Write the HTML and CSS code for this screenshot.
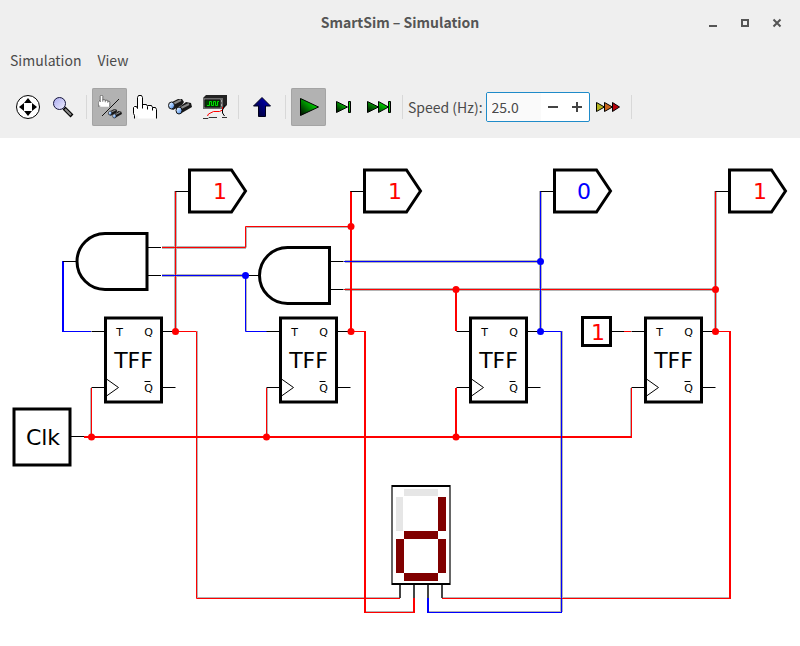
FILE: index.html
```html
<!DOCTYPE html>
<html lang="en">
<head>
<meta charset="utf-8">
<title>SmartSim – Simulation</title>
<link rel="stylesheet" href="styles.css">
</head>
<body>
<header class="titlebar">
  <h1 class="title">SmartSim – Simulation</h1>
  <div class="window-buttons">
    <button class="window-button" aria-label="Minimize"><svg width="10" height="10" shape-rendering="crispEdges"><path d="M1 7h8v2H1z" fill="#555"/></svg></button>
    <button class="window-button" aria-label="Maximize"><svg width="10" height="10" shape-rendering="crispEdges"><path d="M2 2h6v6H2z" fill="none" stroke="#555" stroke-width="2"/></svg></button>
    <button class="window-button" aria-label="Close"><svg width="10" height="10"><path d="M1.500 1.500l7 7M8.500 1.500l-7 7" stroke="#555" stroke-width="2"/></svg></button>
  </div>
</header>
<nav class="menubar">
  <button class="menu">Simulation</button>
  <button class="menu">View</button>
</nav>
<div class="toolbar">
  <button class="tool" aria-label="Scroll">
    <svg width="24" height="24" viewBox="0 0 24 24"><circle cx="12" cy="12" r="11.500" fill="#fff" stroke="#000"/><path d="M12 3l4 5H8zM12 21l4-5H8zM3 12l5-4v8zM21 12l-5-4v8z"/></svg>
  </button>
  <button class="tool" aria-label="Zoom">
    <svg width="24" height="24" viewBox="0 0 24 24"><defs><linearGradient id="lens" x1="0" y1="0" x2="1" y2="1"><stop offset="0" stop-color="#a8a8ee"/><stop offset="1" stop-color="#f0f0ff"/></linearGradient></defs><path d="M13 13l8 8" stroke="#000" stroke-width="4"/><path d="M14 14l6 6" stroke="#888" stroke-width="2"/><circle cx="8.500" cy="8.500" r="6" fill="url(#lens)" stroke="#15153c"/></svg>
  </button>
  <span class="separator"></span>
  <button class="tool pressed" aria-label="Interact or probe">
    <svg width="24" height="24" viewBox="0 0 24 24"><use href="#hand" transform="scale(.5)"/><path d="M4 21L21 4" stroke="#111"/><use href="#binoculars" transform="translate(10 12) scale(.58)"/></svg>
  </button>
  <button class="tool" aria-label="Interact">
    <svg width="24" height="24" viewBox="0 0 24 24"><g id="hand"><path d="M4.500 23.500v-3h-1v-3h-1v-3h-2v-4h2l2 2v-10l1-2h3l1 2v8l1-1h3l1 2 1-1h3l1 2h2l1 2v9z" fill="#fff"/><path d="M1.500 23.500v-3l-1-2v-6l1-1h2l1 2v-11l1-2h3l1 2v11M9.500 9.500h4l1 2v3M14.500 10.500h4l1 2v3M19.500 12.500h3l1 2v9" fill="#fff" stroke="#000"/></g></svg>
  </button>
  <button class="tool" aria-label="Probe">
    <svg width="24" height="24" viewBox="0 0 24 24"><defs><linearGradient id="glass" x1="0" y1="0" x2="1" y2="1"><stop offset="0" stop-color="#fff"/><stop offset=".5" stop-color="#9ec8ff"/><stop offset="1" stop-color="#3975cc"/></linearGradient></defs><g id="binoculars"><path d="M2 8l8-4h4l2 3-2 3-9 5-4-3z" fill="#181818"/><path d="M10 13l8-6 5 1 1 4-12 7z" fill="#181818"/><path d="M5 9l8-4M13 13l8-4" stroke="#888" stroke-width="2"/><ellipse cx="3.500" cy="10.500" rx="3" ry="3.500" fill="url(#glass)" stroke="#111"/><ellipse cx="11" cy="15.500" rx="3" ry="3.500" fill="url(#glass)" stroke="#111"/></g></svg>
  </button>
  <button class="tool" aria-label="Oscilloscope">
    <svg width="24" height="24" viewBox="0 0 24 24"><path d="M0 3l3-3h21v10l-4 4H0z" fill="#222"/><path d="M0 3h20v11H0z" fill="#6a6a6a"/><path d="M2 5h15v7H2z" fill="#003c00" stroke="#111"/><path d="M4 10.500h2.500v-4h2v4h2v-4h2v4h2v-4H16" fill="none" stroke="#00e000"/><path d="M18.500 5v2M18.500 9v2" stroke="#aaa"/><path d="M19.500 12v3l-3 1.500h-6l-5 2.500-1 2" fill="none" stroke="#f00"/><path d="M22 10l-2.500 5v3l2 3" fill="none" stroke="#000"/><path d="M0 23.500h5l1-1h8M19 22.500h5" fill="none" stroke="#333"/></svg>
  </button>
  <span class="separator"></span>
  <button class="tool" aria-label="Up">
    <svg width="24" height="24" viewBox="0 0 24 24"><defs><linearGradient id="up" x1="1" y1="0" x2="0" y2="1"><stop offset="0" stop-color="#0000c8"/><stop offset="1" stop-color="#000020"/></linearGradient></defs><path d="M12 2.500l8.500 8.500h-5v10.500h-7V11h-5z" fill="url(#up)" stroke="#00001a"/></svg>
  </button>
  <span class="separator"></span>
  <button class="tool pressed" aria-label="Run">
    <svg width="24" height="24" viewBox="0 0 24 24"><defs><linearGradient id="green" x1="0" y1="1" x2="1" y2="0"><stop offset=".1" stop-color="#002000"/><stop offset=".7" stop-color="#00c800"/></linearGradient></defs><path d="M3.500 3.500v17L21.500 12z" fill="url(#green)" stroke="#000"/></svg>
  </button>
  <button class="tool" aria-label="Step">
    <svg width="24" height="24" viewBox="0 0 24 24"><path d="M4.500 6.500v11L15.500 12zM16.500 6.500h2v11h-2z" fill="url(#green)" stroke="#000"/></svg>
  </button>
  <button class="tool" aria-label="Fast step">
    <svg width="24" height="24" viewBox="0 0 24 24"><path d="M.5 6.500v11L11.500 12zM11.500 6.500v11L21.500 12zM21.500 6.500h2v11h-2z" fill="url(#green)" stroke="#000"/></svg>
  </button>
  <span class="separator"></span>
  <label class="speed-label" for="speed">Speed (Hz):</label>
  <div class="spin">
    <input class="spin-value" id="speed" type="text" value="25.0">
    <button class="spin-step" aria-label="Decrease"><svg width="12" height="12"><path d="M1 5h10v2H1z" fill="#444"/></svg></button>
    <button class="spin-step" aria-label="Increase"><svg width="12" height="12"><path d="M1 5h4V1h2v4h4v2H7v4H5V7H1z" fill="#444"/></svg></button>
  </div>
  <button class="tool" aria-label="Maximum speed">
    <svg width="24" height="24" viewBox="0 0 24 24"><path d="M.5 7.500v9L8.500 12z" fill="#b4b41e" stroke="#000"/><path d="M8.500 7.500v9l8-4.500z" fill="#c8641e" stroke="#000"/><path d="M16.500 7.500v9l7-4.500z" fill="#b4000a" stroke="#000"/></svg>
  </button>
  <span class="separator"></span>
</div>
<main class="canvas">
  <svg class="circuit" viewBox="0 138 800 508" role="img" aria-label="Four bit counter circuit">
    <defs>
      <g id="tff">
        <path class="pin" d="M-14 13.500H1M-14 69.500H1M56 13.500h14M56 69.500h14"/>
        <path class="body" d="M0 0h56v84H0z"/>
        <path class="pin" d="M1 61l12 8.500L1 78M39 63.500h6"/>
        <text class="small" x="14" y="18" text-anchor="middle">T</text>
        <text class="small" x="43" y="18" text-anchor="middle">Q</text>
        <text class="small" x="43" y="74" text-anchor="middle">Q</text>
        <text class="name" x="28" y="50" text-anchor="middle">TFF</text>
      </g>
      <g id="and">
        <path class="pin" d="M-14 28H1M70 14h14M70 42h14"/>
        <path class="body" d="M70 0v56H28a28 28 0 0 1 0-56z"/>
      </g>
      <g id="out">
        <path class="pin" d="M-14 21.500H1"/>
        <path class="body" d="M0 0h42l14 21-14 21H0z"/>
      </g>
    </defs>

    <path class="shadow" d="M175.500 191v140.500M162 247.500h84M162 275.500h84M345 261.500h195M345 289.500h371M540.500 191v140.500M715.500 191v140.500M561.500 331v281"/>
    <path class="shadow edge" d="M246.500 227.500v20M246 227.500h105M246.500 275v56.500M90.500 388v49M630.500 388v49M197.500 331v267M197 597.500h203M442 597.500h288M428 611.500h133M365 611.500h49M267.500 388v49"/>
    <g class="wire high">
      <path d="M175.500 191v140.500h21v267H400M162 247.500h83.500v-21H351M344 289.500h371.500M715.500 191v140.500H730M91.500 388v49M266.500 388v49M631.500 388v49M624 331.500h7M351 331.500h14M442 598.500h288M365 612.500h49"/>
      <path class="thick" d="M351 191v140M365 331v282M414 598v15M456 289v42M456 388v49M84 437h548M730 331v268"/>
    </g>
    <g class="wire low">
      <path d="M63 331.500h28M162 275.500h84M245.500 275v56.500H267M344 261.500h196M540.500 191v140.500h21v281M428 612.500h134"/>
      <path class="thick" d="M63 261v71M428 598v15"/>
    </g>
    <path class="lead" d="M400 584v14M414 584v14M428 584v14M442 584v14"/>
    <path class="pin" d="M70 436.500h14M611 331.500h13"/>

    <use href="#and" x="77" y="233.500"/>
    <use href="#and" x="259.500" y="247.500"/>
    <use href="#tff" x="105.500" y="318"/>
    <use href="#tff" x="280.500" y="318"/>
    <use href="#tff" x="470.500" y="318"/>
    <use href="#tff" x="645.500" y="318"/>
    <use href="#out" x="189.500" y="170"/>
    <use href="#out" x="364.500" y="170"/>
    <use href="#out" x="554.500" y="170"/>
    <use href="#out" x="729.500" y="170"/>

    <path class="body" d="M14 409h56v56H14zM582.500 317.500h28v28h-28z"/>
    <text class="name" x="43" y="445" text-anchor="middle">Clk</text>
    <g class="high-text">
      <text class="name" x="220" y="199" text-anchor="middle">1</text>
      <text class="name" x="395" y="199" text-anchor="middle">1</text>
      <text class="name" x="760" y="199" text-anchor="middle">1</text>
      <text class="name" x="598" y="340" text-anchor="middle">1</text>
    </g>
    <text class="name low-text" x="584" y="199" text-anchor="middle">0</text>

    <g class="high-dot">
      <circle cx="175.500" cy="331.500" r="3.500"/><circle cx="351" cy="331.500" r="3.500"/><circle cx="351" cy="226.500" r="3.500"/><circle cx="456" cy="289.500" r="3.500"/><circle cx="715.500" cy="289.500" r="3.500"/><circle cx="715.500" cy="331.500" r="3.500"/><circle cx="91.500" cy="437" r="3.500"/><circle cx="266.500" cy="437" r="3.500"/><circle cx="456" cy="437" r="3.500"/>
    </g>
    <g class="low-dot">
      <circle cx="245.500" cy="275.500" r="3.500"/><circle cx="540.500" cy="261.500" r="3.500"/><circle cx="540.500" cy="331.500" r="3.500"/>
    </g>

    <path d="M392 486h58v98h-58z" fill="#fff"/>
    <path class="display-side" d="M392 485v100M450 485v100"/>
    <path class="display-edge" d="M392 486h58M392 584h58"/>
    <path class="segment-off" d="M404 489h34v7h-34zM396 497h7v34h-7z"/>
    <path class="segment-on" d="M438 497h8v34h-8zM404 531h34v8h-34zM396 539h8v34h-8zM438 539h8v34h-8zM404 573h34v8h-34z"/>
  </svg>
</main>
</body>
</html>
```
FILE: styles.css
```css
* { box-sizing: border-box; }
body {
  margin: 0;
  min-height: 100vh;
  display: flex;
  flex-direction: column;
  background: #efefef;
  color: #4a4a4a;
  font: 14px/20px "Noto Sans CJK SC", "Noto Sans", sans-serif;
}
button, input { font: inherit; color: inherit; border: 0; background: none; padding: 0; margin: 0; }
button { display: flex; align-items: center; justify-content: center; }
svg { display: block; }
.titlebar {
  display: grid;
  grid-template-columns: 1fr auto 1fr;
  align-items: center;
  height: 46px;
  padding: 0 12px;
}
.title { grid-column: 2; margin: 0; padding-bottom: 2px; font-size: 14px; font-weight: 700; color: #555; }
.window-buttons { display: flex; justify-content: flex-end; gap: 10px; }
.window-button { width: 22px; height: 22px; }
.menubar { display: flex; gap: 16px; height: 30px; padding: 0 10px 2px; }
.toolbar { display: flex; align-items: center; height: 62px; padding: 0 10px; }
.tool { flex: none; width: 35px; height: 38px; padding-left: 1px; border-radius: 2px; }
.tool.pressed { background: #b2b2b2; box-shadow: inset 0 0 0 1px #a4a4a4; }
.separator { flex: none; width: 1px; height: 24px; margin: 0 5px 0 6px; background: #d8d8d8; }
.speed-label { margin-right: 3px; white-space: nowrap; }
.spin {
  display: flex;
  width: 104px;
  height: 30px;
  border: 1px solid #1f8bc9;
  border-radius: 2px;
  background: #fff;
  overflow: hidden;
}
.spin-value { flex: 1; min-width: 0; padding-left: 5px; background: #fafafa; outline: 0; }
.spin-step { width: 24px; }
.canvas { flex: 1; background: #fff; }
.circuit { width: 100%; height: auto; }
.circuit text { font-family: "DejaVu Sans", sans-serif; }
.name { font-size: 22px; }
.small { font-size: 11px; }
.body { fill: #fff; stroke: #000; stroke-width: 3; }
.pin { fill: none; stroke: #000; }
.lead { stroke: #444; stroke-width: 2; }
.shadow { fill: none; stroke: #b4b4b4; stroke-width: 3; }
.shadow.edge { stroke-width: 1; }
.wire { fill: none; stroke-width: 1; }
.wire .thick { stroke-width: 2; }
.high { stroke: #f00; }
.low { stroke: #00f; }
.high-text, .high-dot { fill: #f00; }
.low-text, .low-dot { fill: #00f; }
.display-side { stroke: #666; stroke-width: 2; }
.display-edge { stroke: #000; stroke-width: 2; }
.segment-off { fill: #e6e6e6; }
.segment-on { fill: #800000; }
```
